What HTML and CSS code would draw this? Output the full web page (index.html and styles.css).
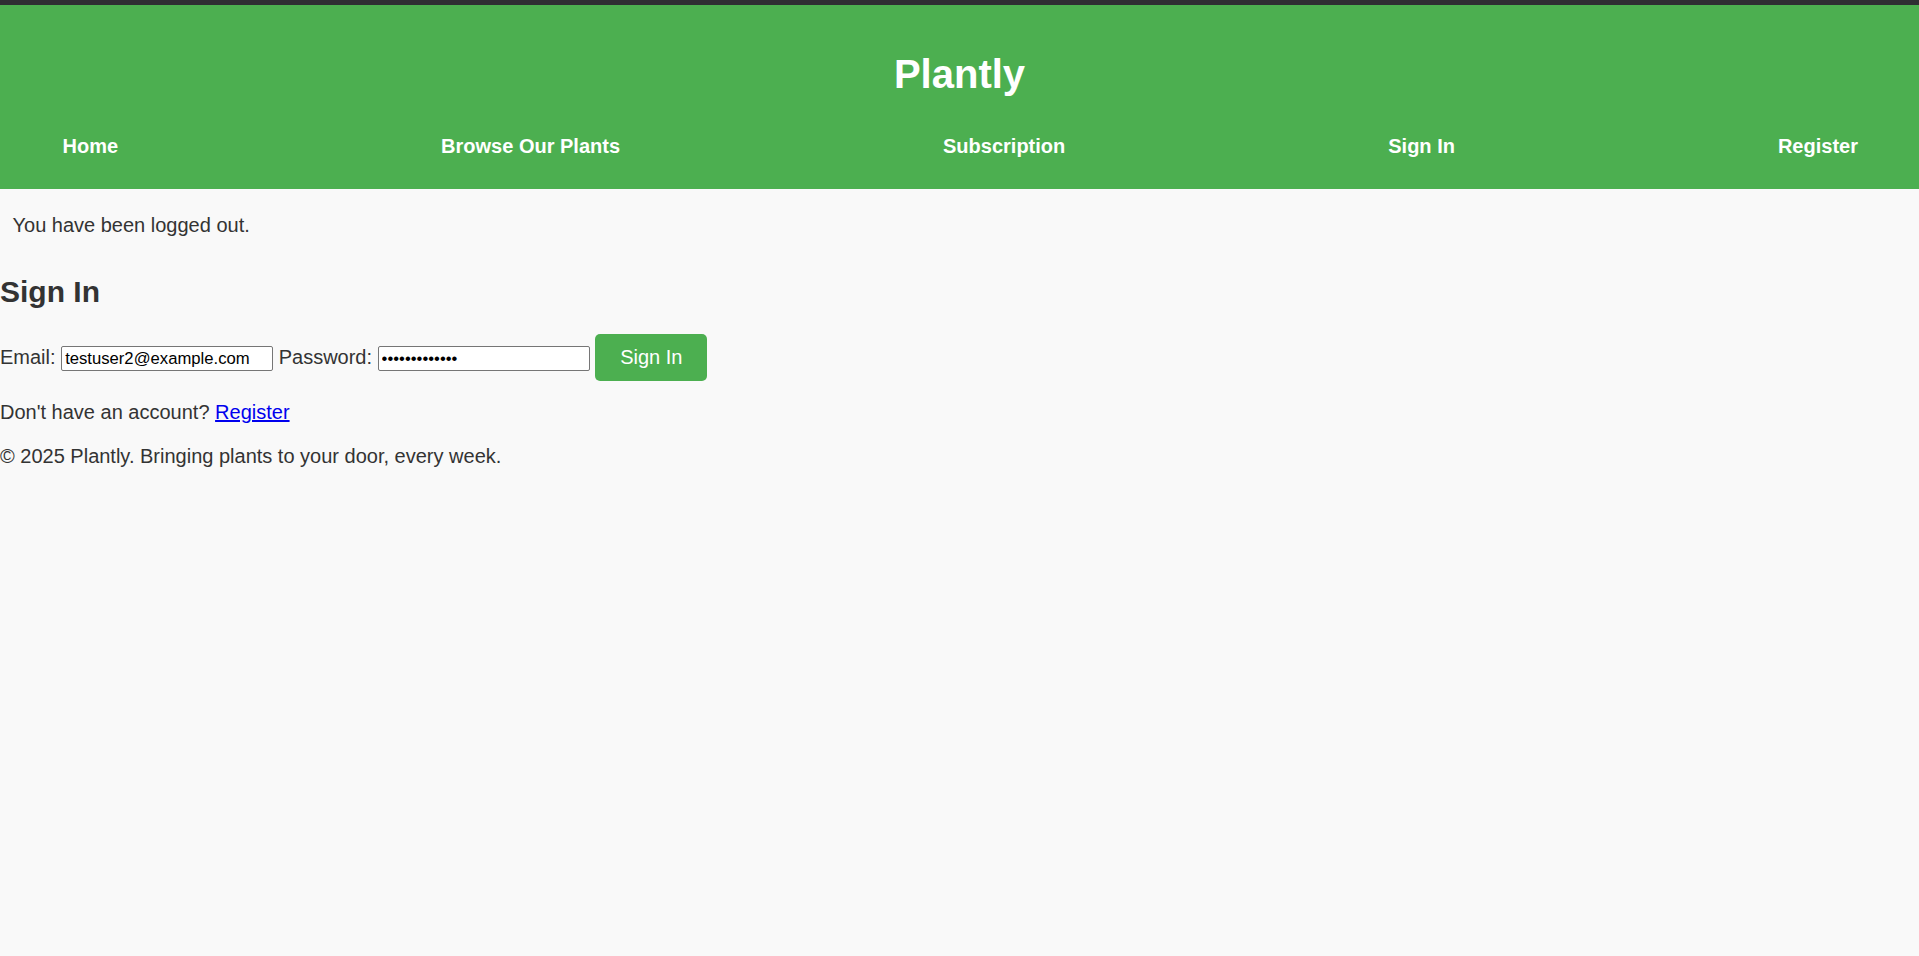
FILE: index.html
```html
<!DOCTYPE html>
<html lang="en">
<head>
<meta charset="utf-8">
<title>Plantly - Sign In</title>
<link rel="stylesheet" href="styles.css">
</head>
<body>
<header class="site-header">
  <h1 class="site-title">Plantly</h1>
  <nav class="site-nav">
    <ul class="nav-list">
      <li><a class="nav-link" href="#">Home</a></li>
      <li><a class="nav-link" href="#">Browse Our Plants</a></li>
      <li><a class="nav-link" href="#">Subscription</a></li>
      <li><a class="nav-link" href="#">Sign In</a></li>
      <li><a class="nav-link" href="#">Register</a></li>
    </ul>
  </nav>
</header>
<div class="flash">You have been logged out.</div>
<main class="content">
  <h2 class="page-title">Sign In</h2>
  <form class="signin-form">Email: <input class="field" type="email" value="testuser2@example.com"> Password: <input class="field" type="password" value="testpassword1"> <button class="btn" type="button">Sign In</button></form>
  <p class="alt">Don't have an account? <a class="alt-link" href="#">Register</a></p>
</main>
<footer class="site-footer">
  <p class="footer-text">© 2025 Plantly. Bringing plants to your door, every week.</p>
</footer>
</body>
</html>
```
FILE: styles.css
```css
html, body {
  margin: 0;
  padding: 0;
}
body {
  background: #f9f9f9;
  color: #333;
  font-family: "Liberation Sans", Arial, sans-serif;
  font-size: 20px;
}
.site-header {
  background: #4caf50;
  border-top: 5px solid #2f2e33;
  padding: 18.7px 0 19px;
  color: #fff;
}
.site-title {
  margin: 28.1px 0 25.5px;
  font-size: 40px;
  font-weight: bold;
  text-align: center;
  line-height: normal;
}
.nav-list {
  display: flex;
  justify-content: space-between;
  list-style: none;
  margin: 0;
  padding: 0 61px 0 62.5px;
}
.nav-link {
  display: block;
  padding: 12.5px 0;
  color: #fff;
  font-weight: bold;
  font-size: 20px;
  text-decoration: none;
}
.flash {
  margin: 12.5px 0 0;
  padding: 12.5px;
}
.content {
  display: block;
}
.page-title {
  font-size: 30px;
  font-weight: bold;
  margin: 24.9px 0;
}
.signin-form {
  margin: 0;
}
.field {
  box-sizing: border-box;
  width: 212px;
  height: 25px;
  padding: 1px 3px;
  border: 1px solid #767676;
  border-radius: 2px;
  background: #fff;
  color: #000;
  font-family: "Liberation Sans", Arial, sans-serif;
  font-size: 16.67px;
  vertical-align: baseline;
}
.btn {
  background: #4caf50;
  color: #fff;
  border: none;
  border-radius: 5px;
  padding: 12px 25px;
  font-family: "Liberation Sans", Arial, sans-serif;
  font-size: 20px;
  line-height: normal;
  cursor: pointer;
}
.alt {
  margin: 20px 0;
}
.alt-link {
  color: #0000ee;
  text-decoration: underline;
}
.footer-text {
  margin: 21px 0 20px;
}
```
